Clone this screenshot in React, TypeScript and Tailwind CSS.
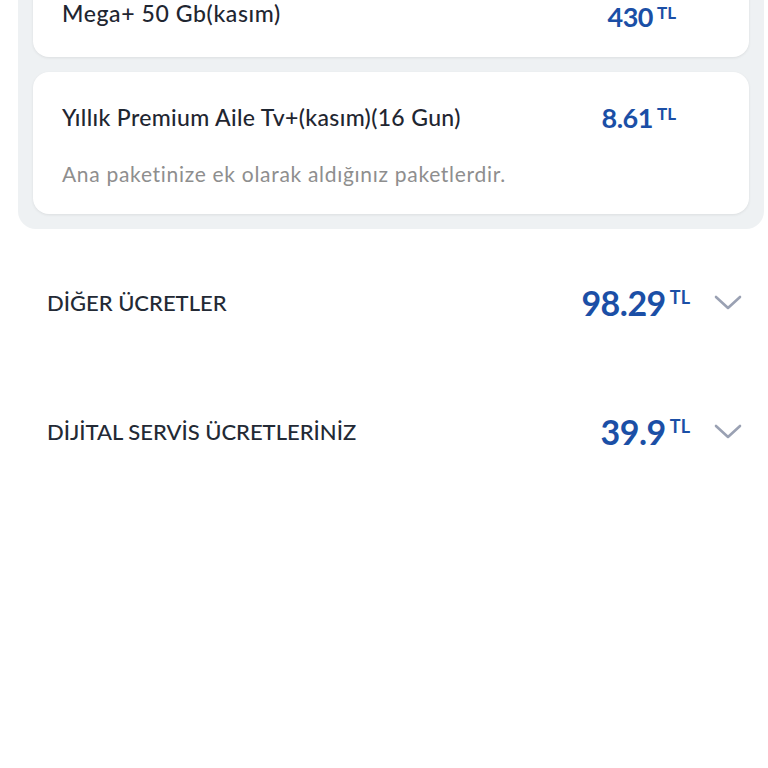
const font = { fontFamily: 'Lato, "Noto Sans", sans-serif' };

function Price({ value, big }: { value: string; big?: boolean }) {
  return (
    <div className="flex items-start text-[#1b4fa6] font-bold leading-none">
      <span className={big ? 'text-[34px] tracking-[-0.5px]' : 'text-[27px] tracking-[-0.5px]'}>{value}</span>
      <span className={big ? 'text-[18px] ml-[4px] mt-[2px]' : 'text-[17px] ml-[4px] mt-[1px]'}>TL</span>
    </div>
  );
}

function Chevron() {
  return (
    <svg width="28" height="16" viewBox="0 0 28 16" fill="none">
      <path d="M2 2 L14 13 L26 2" stroke="#9aa1b3" strokeWidth="2.6" strokeLinecap="round" strokeLinejoin="round" />
    </svg>
  );
}

function SummaryRow({ title, value }: { title: string; value: string }) {
  return (
    <div className="flex items-center h-[129px] pl-[47px] pr-[26px]">
      <div className="flex-1 text-[22px] text-[#232a35] font-medium">{title}</div>
      <Price value={value} big />
      <div className="ml-[24px]"><Chevron /></div>
    </div>
  );
}

export default function App() {
  return (
    <div className="min-h-screen bg-white" style={font}>
      <div className="mx-[18px] mr-[4px] -mt-[40px] bg-[#eef1f3] rounded-b-[18px] px-[15px] pb-[15px] pt-[15px]">
        <div className="bg-white rounded-[16px] shadow-[0_1px_3px_rgba(0,0,0,0.08)] h-[82px] flex items-end pb-[27px] pl-[29px] pr-[73px]">
          <div className="flex-1 text-[23px] tracking-[0.6px] text-[#1f2631] font-medium">Mega+ 50 Gb(kasım)</div>
          <Price value="430" />
        </div>
        <div className="bg-white rounded-[16px] shadow-[0_1px_3px_rgba(0,0,0,0.08)] mt-[15px] h-[142px] pl-[29px] pr-[73px] pt-[28px]">
          <div className="flex items-center">
            <div className="flex-1 text-[23px] tracking-[0.35px] text-[#1f2631] font-medium">Yıllık Premium Aile Tv+(kasım)(16 Gun)</div>
            <Price value="8.61" />
          </div>
          <div className="mt-[23px] text-[21px] tracking-[0.7px] text-[#8e8e8e]">Ana paketinize ek olarak aldığınız paketlerdir.</div>
        </div>
      </div>
      <div className="mt-[9px]">
        <SummaryRow title="DİĞER ÜCRETLER" value="98.29" />
        <SummaryRow title="DİJİTAL SERVİS ÜCRETLERİNİZ" value="39.9" />
      </div>
    </div>
  );
}
